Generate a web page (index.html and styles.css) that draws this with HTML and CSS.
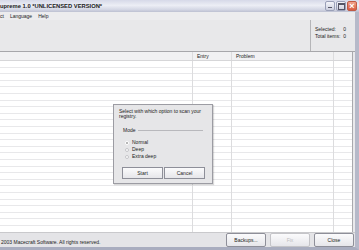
FILE: index.html
```
<!DOCTYPE html>
<html lang="en">
<head>
    <meta charset="UTF-8">
    <title>RegSupreme 1.0</title>
    <link rel="stylesheet" href="styles.css">
</head>
<body>
    <div class="window">
        <div class="titlebar">
            <span class="title">upreme 1.0 *UNLICENSED VERSION*</span>
            <div class="controls">
                <span class="ctl ctl-min"></span>
                <span class="ctl ctl-max"></span>
                <span class="ctl ctl-close">×</span>
            </div>
        </div>
        <div class="frame">
            <div class="menubar">
                <span>ct</span>
                <span>Language</span>
                <span>Help</span>
            </div>
            <div class="toolbar">
                <div class="toolbar-space"></div>
                <div class="stats">
                    <div class="stat"><span>Selected:</span><span>0</span></div>
                    <div class="stat"><span>Total items:</span><span>0</span></div>
                </div>
            </div>
            <div class="list">
                <div class="list-head">
                    <div class="col col-key"></div>
                    <div class="col col-entry">Entry</div>
                    <div class="col col-problem">Problem</div>
                    <div class="col col-last"></div>
                </div>
                <div class="list-body">
                    <div class="col col-key"></div>
                    <div class="col col-entry"></div>
                    <div class="col col-problem"></div>
                    <div class="col col-last"></div>
                </div>
            </div>
            <div class="statusbar">
                <span class="copy">2003 Macecraft Software. All rights reserved.</span>
                <div class="buttons">
                    <button class="btn">Backups...</button>
                    <button class="btn" disabled>Fix</button>
                    <button class="btn">Close</button>
                </div>
            </div>
        </div>
    </div>

    <div class="dialog">
        <p class="prompt">Select with which option to scan your registry.</p>
        <div class="mode">
            <div class="mode-title"><span>Mode</span><span class="rule"></span></div>
            <label class="opt"><span class="radio checked"></span>Normal</label>
            <label class="opt"><span class="radio"></span>Deep</label>
            <label class="opt"><span class="radio"></span>Extra deep</label>
        </div>
        <div class="dialog-buttons">
            <button class="dbtn">Start</button>
            <button class="dbtn">Cancel</button>
        </div>
    </div>
</body>
</html>
```
FILE: styles.css
```
* {
    box-sizing: border-box;
    margin: 0;
    padding: 0;
}

body {
    width: 359px;
    height: 250px;
    overflow: hidden;
    font-family: "Liberation Sans", Arial, sans-serif;
    font-size: 5px;
    color: #222;
    background: #b9bccb;
    position: relative;
}

.window {
    display: flex;
    flex-direction: column;
    width: 359px;
    height: 250px;
}

.titlebar {
    height: 12px;
    display: flex;
    align-items: center;
    justify-content: space-between;
    background: linear-gradient(#d6d9e8, #eceef5 45%, #d3d6e4 80%, #bcc0d1);
}

.title {
    font-weight: bold;
    font-size: 5.8px;
    color: #1a1a1a;
}

.controls {
    display: flex;
    gap: 1px;
    padding-right: 2px;
}

.ctl {
    width: 10px;
    height: 10px;
    border: 1px solid #9aa0b8;
    border-radius: 2px;
    background: linear-gradient(#f4f5fa, #cdd0df);
    position: relative;
    display: flex;
    align-items: center;
    justify-content: center;
}

.ctl-min::after {
    content: "";
    width: 4px;
    height: 1px;
    background: #556;
    position: absolute;
    bottom: 2px;
    left: 2px;
}

.ctl-max::after {
    content: "";
    width: 5px;
    height: 4px;
    border: 1px solid #556;
    border-top-width: 2px;
}

.ctl-close {
    background: linear-gradient(#f0a28c, #d85c42);
    border-color: #c05a45;
    color: #fff;
    font-size: 9px;
    font-weight: bold;
    line-height: 1;
}

.frame {
    flex: 1;
    display: flex;
    flex-direction: column;
    border-right: 4px solid #b6b9c9;
    border-bottom: 3px solid #a9adbf;
    background: #e9e9ec;
}

.menubar {
    height: 8px;
    display: flex;
    align-items: center;
    gap: 6px;
    background: #ececee;
}

.toolbar {
    height: 32px;
    display: flex;
    background: #e8e8ea;
    border-bottom: 1px solid #a7a7ab;
}

.toolbar-space {
    flex: 1;
}

.stats {
    width: 45px;
    border-left: 1px solid #b5b5b8;
    padding: 6px 0 0 4px;
    display: flex;
    flex-direction: column;
    gap: 1px;
}

.stat {
    display: flex;
    justify-content: space-between;
    padding-right: 9px;
    line-height: 6px;
}

.list {
    flex: 1;
    display: flex;
    flex-direction: column;
    margin-right: 2px;
    background: #fff;
    border-right: 1px solid #a9a9ad;
}

.list-head {
    height: 9px;
    display: flex;
    background: #f1f1f3;
    border-bottom: 1px solid #d6d6d8;
}

.list-body {
    flex: 1;
    display: flex;
    background: repeating-linear-gradient(#fff 0, #fff 5.5px, #e8e8ea 5.5px, #e8e8ea 6.6px);
}

.col {
    border-right: 1px solid #dcdcde;
    padding-left: 4px;
    line-height: 9px;
}

.col-key {
    width: 193px;
    padding: 0;
}

.col-entry {
    width: 39px;
}

.col-problem {
    width: 102px;
}

.col-last {
    flex: 1;
    border-right: none;
}

.statusbar {
    height: 15px;
    display: flex;
    align-items: center;
    justify-content: space-between;
    background: #e4e4e7;
    border-top: 1px solid #c9c9cc;
}

.copy {
    padding-left: 1px;
    padding-top: 3px;
}

.buttons {
    display: flex;
    gap: 4px;
    padding-right: 1px;
}

.btn,
.dbtn {
    height: 14px;
    width: 40px;
    font-family: "Liberation Sans", Arial, sans-serif;
    font-size: 5px;
    color: #222;
    background: linear-gradient(#fbfbfc, #e6e6ea);
    border: 1px solid #8e8f99;
    border-radius: 2px;
}

.btn:disabled {
    color: #bdbdc0;
    border-color: #c4c4c8;
}

.dialog {
    position: absolute;
    left: 113px;
    top: 104px;
    width: 100px;
    height: 80px;
    background: #e6e6e8;
    border: 1px solid #9c9ca3;
    box-shadow: 1px 1px 1px rgba(0, 0, 0, 0.15);
    padding: 4px 5px 0 5px;
}

.prompt {
    line-height: 5px;
    width: 90px;
}

.mode {
    margin-top: 8px;
    padding-left: 4px;
}

.mode-title {
    display: flex;
    align-items: center;
    gap: 2px;
    line-height: 6px;
}

.rule {
    flex: 1;
    height: 1px;
    background: #b8b8bc;
    margin-right: 4px;
}

.opt {
    display: flex;
    align-items: center;
    gap: 3px;
    line-height: 7px;
    margin-left: 2px;
}

.mode-title + .opt {
    margin-top: 6px;
}

.radio {
    width: 4px;
    height: 4px;
    border-radius: 50%;
    border: 1px solid #c4c4c8;
    background: #fff;
}

.radio.checked {
    border-color: #fff;
    background: radial-gradient(#333 40%, #fff 60%);
}

.dialog-buttons {
    display: flex;
    margin-top: 7px;
    margin-left: 3px;
    gap: 1px;
}

.dbtn {
    width: 41px;
    height: 12px;
    border-radius: 0;
}
```
